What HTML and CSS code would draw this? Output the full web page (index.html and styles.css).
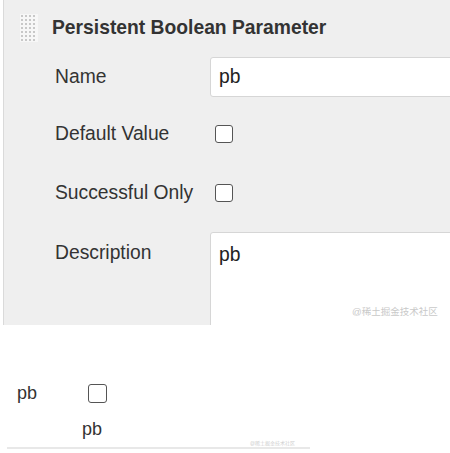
FILE: index.html
```html
<!DOCTYPE html>
<html>
<head>
<meta charset="utf-8">
<link rel="stylesheet" href="styles.css">
</head>
<body>
<div class="panel">
  <div class="title-row">
    <svg class="grip" width="18" height="28" viewBox="0 0 18 28">
      <rect width="18" height="28" fill="#f7f7f7"/>
      <g fill="#c8c8c8">
        <rect x="1" y="1" width="2" height="2"/><rect x="5" y="1" width="2" height="2"/><rect x="9" y="1" width="2" height="2"/><rect x="13" y="1" width="2" height="2"/>
        <rect x="1" y="5" width="2" height="2"/><rect x="5" y="5" width="2" height="2"/><rect x="9" y="5" width="2" height="2"/><rect x="13" y="5" width="2" height="2"/>
        <rect x="1" y="9" width="2" height="2"/><rect x="5" y="9" width="2" height="2"/><rect x="9" y="9" width="2" height="2"/><rect x="13" y="9" width="2" height="2"/>
        <rect x="1" y="13" width="2" height="2"/><rect x="5" y="13" width="2" height="2"/><rect x="9" y="13" width="2" height="2"/><rect x="13" y="13" width="2" height="2"/>
        <rect x="1" y="17" width="2" height="2"/><rect x="5" y="17" width="2" height="2"/><rect x="9" y="17" width="2" height="2"/><rect x="13" y="17" width="2" height="2"/>
        <rect x="1" y="21" width="2" height="2"/><rect x="5" y="21" width="2" height="2"/><rect x="9" y="21" width="2" height="2"/><rect x="13" y="21" width="2" height="2"/>
        <rect x="1" y="25" width="2" height="2"/><rect x="5" y="25" width="2" height="2"/><rect x="9" y="25" width="2" height="2"/><rect x="13" y="25" width="2" height="2"/>
      </g>
    </svg>
    <span class="title">Persistent Boolean Parameter</span>
  </div>
  <div class="row row-name">
    <span class="label">Name</span>
    <div class="input">pb</div>
  </div>
  <div class="row row-check">
    <span class="label">Default Value</span>
    <span class="checkbox"></span>
  </div>
  <div class="row row-check2">
    <span class="label">Successful Only</span>
    <span class="checkbox"></span>
  </div>
  <div class="row row-desc">
    <span class="label label-desc">Description</span>
    <div class="textarea">pb<span class="wm">@稀土掘金技术社区</span></div>
  </div>
</div>
<div class="result">
  <div class="result-row">
    <span class="res-name">pb</span>
    <span class="checkbox small"></span>
  </div>
  <div class="res-desc">pb</div>
  <div class="res-line"><span class="wm2">@稀土掘金技术社区</span></div>
</div>
</body>
</html>
```
FILE: styles.css
```css
html, body {
  margin: 0;
  padding: 0;
  background: #ffffff;
  font-family: "Liberation Sans", Arial, "Noto Sans CJK SC", sans-serif;
  color: #333333;
  overflow: hidden;
}
.panel {
  margin-left: 3px;
  width: 460px;
  height: 325px;
  background: #efefef;
  border-left: 1px solid #dadada;
  box-sizing: border-box;
  overflow: hidden;
}
.title-row {
  display: flex;
  align-items: center;
  padding: 14px 0 0 16px;
  height: 28px;
}
.grip {
  display: block;
  flex: none;
}
.title {
  margin-left: 14px;
  font-weight: bold;
  font-size: 19.3px;
  color: #333;
}
.row {
  display: flex;
  align-items: center;
  padding-left: 51px;
}
.label {
  width: 155px;
  flex: none;
  font-size: 19.3px;
  color: #333;
}
.row-name {
  margin-top: 15px;
  height: 40px;
}
.input {
  flex: 1;
  height: 40px;
  box-sizing: border-box;
  background: #fff;
  border: 1px solid #d6d6d6;
  border-radius: 3px;
  padding: 0 8px;
  display: flex;
  align-items: center;
  font-size: 19.3px;
  color: #222;
}
.checkbox {
  display: block;
  width: 18px;
  height: 18px;
  box-sizing: border-box;
  border: 1.5px solid #555;
  border-radius: 3px;
  background: #fff;
  margin-left: 5px;
}
.row-check {
  margin-top: 28px;
  height: 18px;
}
.row-check2 {
  margin-top: 41px;
  height: 18px;
}
.row-desc {
  margin-top: 30px;
  align-items: flex-start;
}
.label-desc {
  margin-top: 10px;
}
.textarea {
  position: relative;
  flex: 1;
  height: 120px;
  background: #fff;
  border: 1px solid #d6d6d6;
  border-radius: 3px 0 0 0;
  box-sizing: border-box;
  padding: 11px 8px;
  font-size: 19.3px;
  color: #222;
}
.wm {
  position: absolute;
  left: 141px;
  top: 71px;
  font-size: 9.5px;
  color: #c9c9c9;
  white-space: nowrap;
}
.result {
  padding-top: 58px;
}
.result-row {
  display: flex;
  align-items: center;
  height: 20px;
}
.res-name {
  margin-left: 17px;
  font-size: 18px;
  color: #333;
  width: 71px;
}
.checkbox.small {
  margin-left: 0;
  width: 19px;
  height: 19px;
}
.res-desc {
  margin: 16px 0 0 82px;
  font-size: 18px;
  color: #333;
  line-height: 20px;
}
.res-line {
  position: relative;
  margin: 8px 0 0 7px;
  width: 303px;
  height: 2px;
  background: #e8e8e8;
}
.wm2 {
  position: absolute;
  left: 243px;
  top: -8px;
  font-size: 5px;
  color: #cfcfcf;
  white-space: nowrap;
}
```
